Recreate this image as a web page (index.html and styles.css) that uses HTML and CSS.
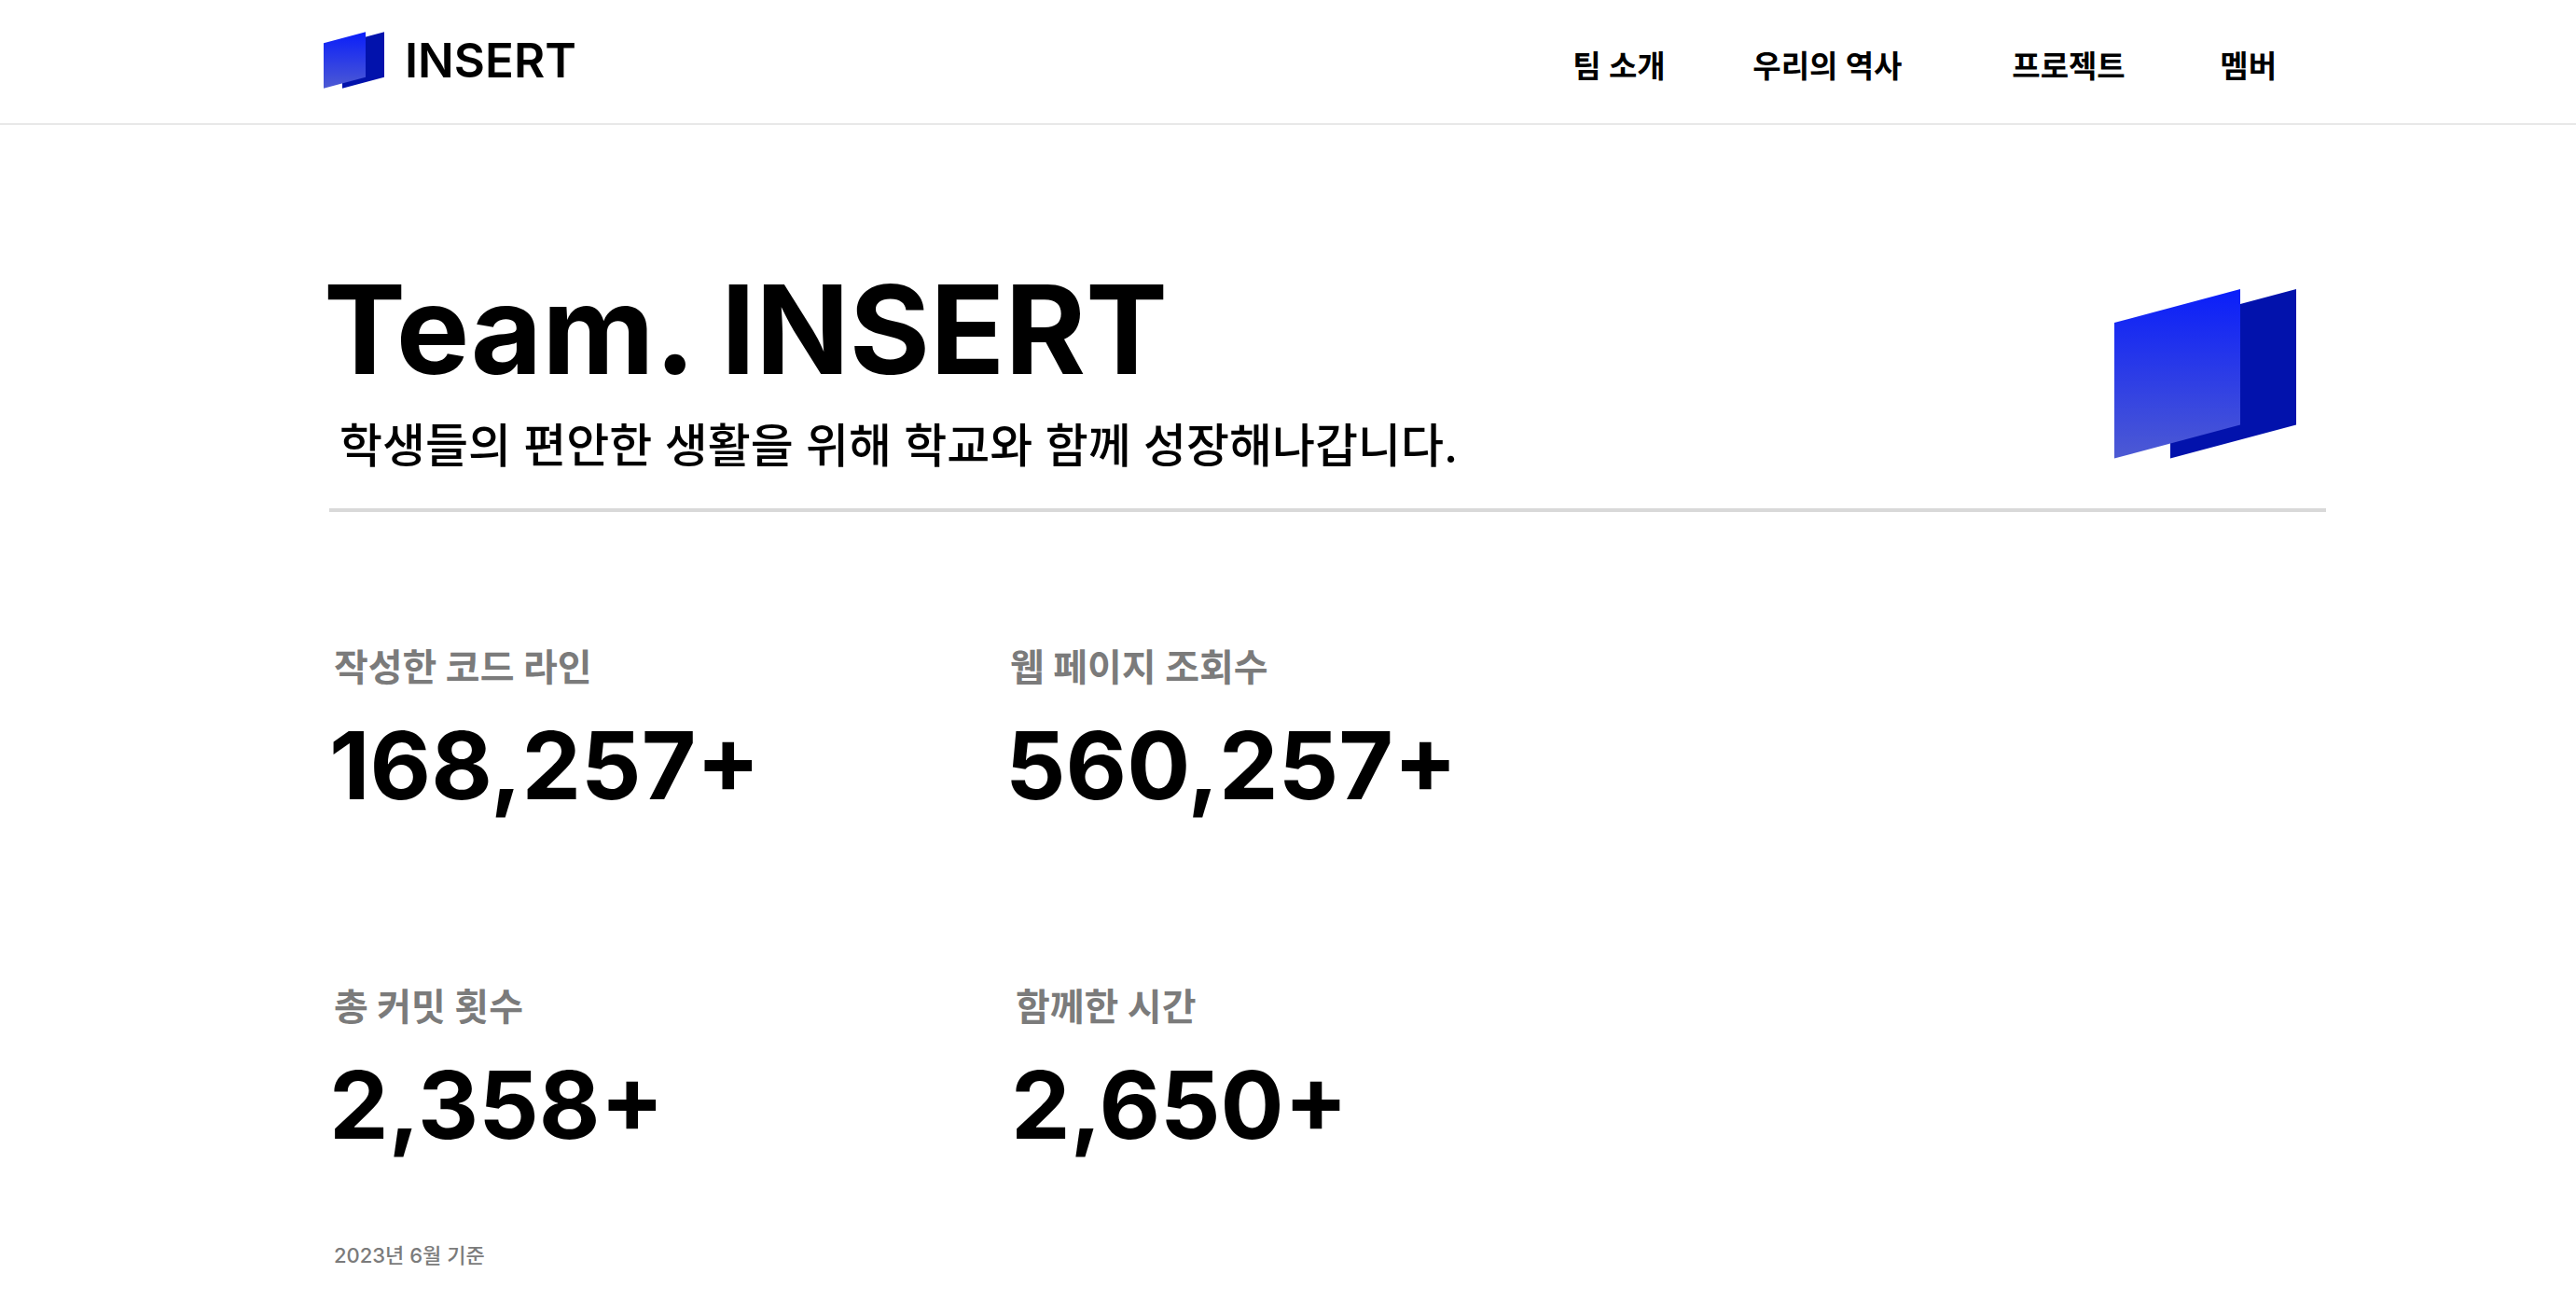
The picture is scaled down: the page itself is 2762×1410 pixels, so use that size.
FILE: index.html
```html
<!DOCTYPE html>
<html lang="ko">
<head>
<meta charset="utf-8">
<meta name="viewport" content="width=device-width, initial-scale=1">
<title>Team. INSERT</title>
<link rel="stylesheet" href="styles.css">
</head>
<body>
<header class="header">
  <a class="brand" href="#">
    <svg class="brand-mark" viewBox="0 0 195 182" aria-hidden="true">
      <defs>
        <linearGradient id="panel" x1="0" y1="0" x2="0" y2="1">
          <stop offset="0" stop-color="#0a1efa"/>
          <stop offset="1" stop-color="#4d5ad3"/>
        </linearGradient>
      </defs>
      <path fill="#0212ac" d="M60 36 195 0v145.5l-135 36z"/>
      <path fill="url(#panel)" d="M0 36 135 0v145.5L0 181.5z"/>
    </svg>
    <span class="brand-name">INSERT</span>
  </a>
  <nav class="nav">
    <a href="#team">팀 소개</a>
    <a href="#history">우리의 역사</a>
    <a href="#projects">프로젝트</a>
    <a href="#members">멤버</a>
  </nav>
</header>
<main class="main">
  <section class="hero" id="team">
    <div>
      <h1 class="title">Team. INSERT</h1>
      <p class="subtitle">학생들의 편안한 생활을 위해 학교와 함께 성장해나갑니다.</p>
    </div>
    <svg class="hero-mark" viewBox="0 0 195 182" aria-hidden="true">
      <path fill="#0212ac" d="M60 36 195 0v145.5l-135 36z"/>
      <path fill="url(#panel)" d="M0 36 135 0v145.5L0 181.5z"/>
    </svg>
  </section>
  <section class="stats">
    <dl class="stats-row">
      <div>
        <dt class="label">작성한 코드 라인</dt>
        <dd class="value">168,257+</dd>
      </div>
      <div>
        <dt class="label">웹 페이지 조회수</dt>
        <dd class="value">560,257+</dd>
      </div>
    </dl>
    <dl class="stats-row stats-row-wide">
      <div>
        <dt class="label">총 커밋 횟수</dt>
        <dd class="value">2,358+</dd>
      </div>
      <div>
        <dt class="label">함께한 시간</dt>
        <dd class="value">2,650+</dd>
      </div>
    </dl>
  </section>
  <p class="note">2023년 6월 기준</p>
</main>
</body>
</html>
```
FILE: styles.css
```css
* {
  box-sizing: border-box;
  margin: 0;
}

body {
  background: #fff;
  color: #000;
  font-family: Inter, "Noto Sans CJK KR", sans-serif;
}

a {
  color: inherit;
  text-decoration: none;
}

.header {
  display: flex;
  justify-content: space-between;
  align-items: center;
  padding: 34px 321px 37px 347px;
  border-bottom: 2px solid #e8e8e8;
}

.brand {
  display: flex;
  align-items: center;
  gap: 22px;
}

.brand-mark {
  width: 65px;
  height: 61px;
}

.brand-name {
  font-size: 51px;
  font-weight: 600;
  line-height: 60px;
}

.nav {
  display: grid;
  grid-template-columns: 193px 278px 223px auto;
  padding-top: 12px;
  font-size: 33px;
  font-weight: 600;
  line-height: 40px;
}

.main {
  padding: 139px 268px 40px 353px;
}

.hero {
  display: flex;
  justify-content: space-between;
  align-items: flex-start;
  padding: 0 32px 35px 0;
  border-bottom: 4px solid #d9d9d9;
}

.title {
  margin-left: -6px;
  font-size: 132px;
  font-weight: 700;
  line-height: 160px;
}

.subtitle {
  margin-top: 13px;
  padding-left: 11px;
  font-size: 50px;
  font-weight: 500;
  line-height: 64px;
}

.hero-mark {
  width: 195px;
  height: 182px;
  margin-top: 37px;
}

.stats {
  display: grid;
  gap: 176px;
  padding-top: 143px;
}

.stats-row {
  display: grid;
  grid-template-columns: 725px 1fr;
}

.stats-row-wide {
  grid-template-columns: 731px 1fr;
}

.label {
  padding-left: 5px;
  color: #7b7b7b;
  font-size: 40px;
  font-weight: 700;
  line-height: 48px;
}

.value {
  margin-top: 20px;
  font-size: 101px;
  font-weight: 700;
  line-height: 120px;
}

.note {
  margin-top: 86px;
  padding-left: 5px;
  color: #7b7b7b;
  font-size: 22px;
  font-weight: 500;
  line-height: 32px;
}
```
